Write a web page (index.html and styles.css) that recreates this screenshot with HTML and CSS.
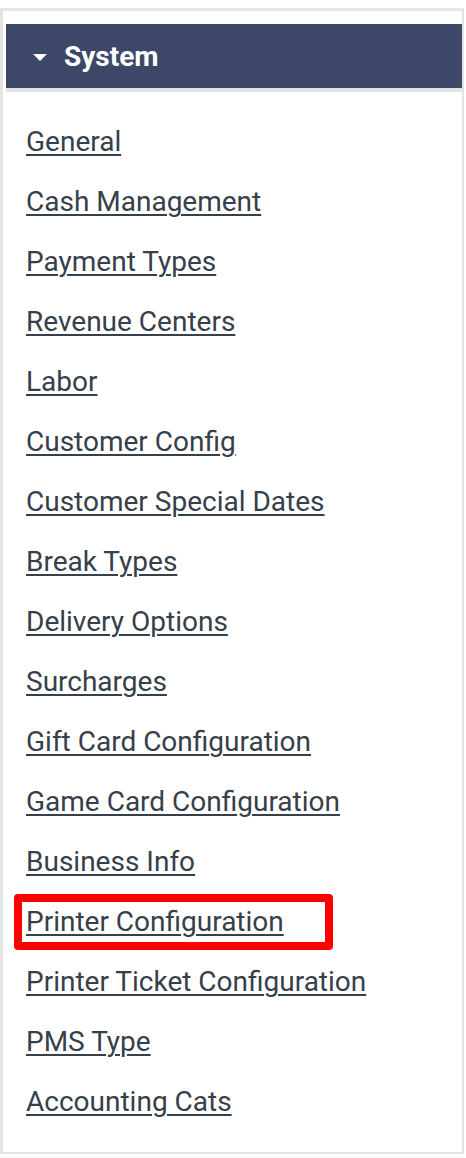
FILE: index.html
```html
<!DOCTYPE html>
<html lang="en">
<head>
    <meta charset="UTF-8">
    <meta name="viewport" content="width=device-width, initial-scale=1.0">
    <title>System</title>
    <link rel="stylesheet" href="styles.css">
</head>
<body>
    <div class="panel">
        <div class="panel_head">
            <span class="caret"></span>
            <h2>System</h2>
        </div>
        <ul class="menu">
            <li><a href="#">General</a></li>
            <li><a href="#">Cash Management</a></li>
            <li><a href="#">Payment Types</a></li>
            <li><a href="#">Revenue Centers</a></li>
            <li><a href="#">Labor</a></li>
            <li><a href="#">Customer Config</a></li>
            <li><a href="#">Customer Special Dates</a></li>
            <li><a href="#">Break Types</a></li>
            <li><a href="#">Delivery Options</a></li>
            <li><a href="#">Surcharges</a></li>
            <li><a href="#">Gift Card Configuration</a></li>
            <li><a href="#">Game Card Configuration</a></li>
            <li><a href="#">Business Info</a></li>
            <li class="marked"><a href="#">Printer Configuration</a></li>
            <li><a href="#">Printer Ticket Configuration</a></li>
            <li><a href="#">PMS Type</a></li>
            <li><a href="#">Accounting Cats</a></li>
        </ul>
    </div>
</body>
</html>
```

FILE: styles.css
```css
body{
    margin: 0;
    padding-top: 8px;
    font-family: Roboto, "Liberation Sans", sans-serif;
    background-color: white;
}

.panel{
    width: 459px;
    border-top: solid 3px #e7e7e7;
    border-left: solid 3px #e4e4e4;
    border-right: solid 2px #e4e4e4;
    border-bottom: solid 2px #e4e4e4;
    padding-top: 13px;
    background-color: white;
}

.panel_head{
    display: flex;
    align-items: center;
    gap: 17px;
    height: 64px;
    margin-left: 3px;
    padding-left: 27px;
    background-color: #3d4869;
    border-bottom: solid 4px #e4e4e4;
}

.caret{
    width: 0;
    height: 0;
    border-left: 7px solid transparent;
    border-right: 7px solid transparent;
    border-top: 7px solid white;
    margin-top: 2px;
}

.panel_head h2{
    margin: 0;
    color: white;
    font-size: 28px;
    font-weight: bold;
}

.menu{
    list-style: none;
    margin: 0;
    padding: 20px 0 20px 23px;
}

.menu li{
    height: 60px;
    line-height: 60px;
    font-size: 28px;
}

.menu a{
    color: #36404a;
    text-decoration: underline;
    text-decoration-thickness: 2px;
    text-underline-offset: 3px;
}

.marked{
    position: relative;
}

/* red box drawn round the item in the screenshot */
.marked::after{
    content: "";
    position: absolute;
    left: -12px;
    top: 2px;
    width: 303px;
    height: 40px;
    border: solid 8px #ff0000;
    border-radius: 4px;
}
```
